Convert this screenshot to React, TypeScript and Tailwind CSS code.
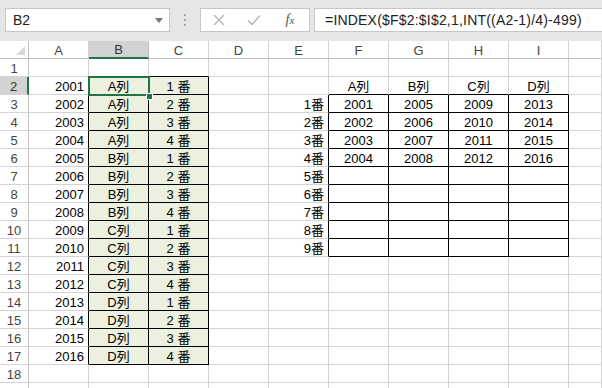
import React from "react";

const colLetters = ["A", "B", "C", "D", "E", "F", "G", "H", "I", ""];
const rowCount = 19;
const letters = ["A", "B", "C", "D"];

interface Cell {
  text?: string;
  align?: "left" | "center" | "right";
  fill?: boolean;
  blackR?: boolean;
  blackB?: boolean;
}

function getCell(r: number, c: number): Cell {
  const cell: Cell = {};
  // left block: A2:C17
  if (r >= 2 && r <= 17) {
    const i = r - 2;
    if (c === 0) {
      cell.text = String(2001 + i);
      cell.align = "right";
      cell.blackR = true;
    }
    if (c === 1) {
      cell.text = letters[Math.floor(i / 4)] + "列";
      cell.align = "center";
      cell.fill = true;
      cell.blackR = true;
      cell.blackB = true;
    }
    if (c === 2) {
      cell.text = (i % 4) + 1 + " 番";
      cell.align = "center";
      cell.fill = true;
      cell.blackR = true;
      cell.blackB = true;
    }
  }
  if (r === 1 && (c === 1 || c === 2)) cell.blackB = true;

  // right table: E2:I11
  if (r === 2 && c >= 5 && c <= 8) {
    cell.text = letters[c - 5] + "列";
    cell.align = "center";
    cell.blackB = true;
  }
  if (r >= 3 && r <= 11) {
    if (c === 4) {
      cell.text = r - 2 + "番";
      cell.align = "right";
      cell.blackR = true;
    }
    if (c >= 5 && c <= 8) {
      cell.blackR = true;
      cell.blackB = true;
      if (r <= 6) {
        cell.text = String(2001 + (c - 5) * 4 + (r - 3));
        cell.align = "center";
      }
    }
  }
  return cell;
}

function TopBar() {
  return (
    <div className="h-[41px] bg-[#e6e6e6] flex items-start pt-[8px] pl-[5px]">
      {/* Name box */}
      <div className="w-[165px] h-[24px] bg-white border border-[#c6c6c6] flex items-center pl-[7px] pr-[6px]">
        <span className="flex-1 text-[14px] text-[#222] leading-none">B2</span>
        <svg width="8" height="5" viewBox="0 0 8 5">
          <path d="M0 0h8L4 5z" fill="#777" />
        </svg>
      </div>
      {/* grip dots */}
      <div className="w-[30px] h-[24px] flex flex-col items-center justify-center gap-[3px]">
        <span className="w-[2px] h-[2px] bg-[#a8a8a8]" />
        <span className="w-[2px] h-[2px] bg-[#a8a8a8]" />
        <span className="w-[2px] h-[2px] bg-[#a8a8a8]" />
      </div>
      {/* buttons */}
      <div className="w-[110px] h-[24px] bg-white border border-[#c6c6c6] flex items-center">
        <div className="w-[36px] flex justify-center">
          <svg width="12" height="12" viewBox="0 0 12 12">
            <path d="M1 1l10 10M11 1L1 11" stroke="#b4b4b4" strokeWidth="1.3" />
          </svg>
        </div>
        <div className="w-[34px] flex justify-center">
          <svg width="14" height="12" viewBox="0 0 14 12">
            <path d="M1 6.5l4 4L13 1.5" stroke="#b4b4b4" strokeWidth="1.4" fill="none" />
          </svg>
        </div>
        <div className="flex-1 flex justify-center">
          <span className="font-['Liberation_Serif',serif] italic text-[14px] text-[#555] leading-none">
            f<span className="text-[11px]">x</span>
          </span>
        </div>
      </div>
      {/* formula */}
      <div className="ml-[4px] flex-1 h-[24px] bg-white border border-[#c6c6c6] border-r-0 flex items-center pl-[10px]">
        <span className="text-[14px] text-[#222] leading-none whitespace-nowrap tracking-[0.2px]">
          =INDEX($F$2:$I$2,1,INT((A2-1)/4)-499)
        </span>
      </div>
    </div>
  );
}

function Sheet() {
  const rows = Array.from({ length: rowCount }, (_, i) => i + 1);
  return (
    <div className="grid grid-cols-[29px_repeat(9,60px)_1fr] auto-rows-[18px]">
      {/* corner */}
      <div className="border-r border-b border-r-[#bfbfbf] border-b-[#bfbfbf] flex items-end justify-end pr-[3px] pb-[3px]">
        <svg width="9" height="9" viewBox="0 0 9 9">
          <path d="M9 0V9H0z" fill="#d9d9d9" />
        </svg>
      </div>
      {colLetters.map((l, c) => (
        <div
          key={"h" + c}
          className={
            c === 1
              ? "flex items-center justify-center pt-[1px] text-[13px] leading-none text-[#333] bg-[#d2d2d2] border-r border-r-[#bfbfbf] border-b-2 border-b-[#217346]"
              : "flex items-center justify-center pt-[1px] text-[13px] leading-none text-[#444] border-r border-b border-r-[#d4d4d4] border-b-[#bfbfbf]"
          }
        >
          {l}
        </div>
      ))}
      {rows.map((r) => (
        <React.Fragment key={r}>
          <div
            className={
              r === 2
                ? "flex items-center justify-center pt-[2px] text-[13px] leading-none text-[#333] bg-[#d2d2d2] border-b border-b-[#d4d4d4] border-r-2 border-r-[#217346]"
                : "flex items-center justify-center pt-[2px] text-[13px] leading-none text-[#444] border-r border-b border-r-[#bfbfbf] border-b-[#d4d4d4]"
            }
          >
            {r < rowCount ? r : ""}
          </div>
          {colLetters.map((_, c) => {
            const cell = getCell(r, c);
            const align =
              cell.align === "right"
                ? "justify-end pr-[4px]"
                : cell.align === "center"
                ? "justify-center"
                : "justify-start pl-[3px]";
            return (
              <div
                key={c}
                className={[
                  "flex items-center pt-[2px] text-[13px] leading-none text-black whitespace-pre border-r border-b",
                  align,
                  cell.fill ? "bg-[#ebf1de]" : "bg-white",
                  cell.blackR ? "border-r-black" : "border-r-[#d4d4d4]",
                  cell.blackB ? "border-b-black" : "border-b-[#d4d4d4]",
                  r === 2 && c === 1 ? "relative" : "",
                ].join(" ")}
              >
                {cell.text}
                {r === 2 && c === 1 && (
                  <div className="absolute -left-[1px] -top-[1px] w-[62px] h-[20px] border-2 border-[#217346] z-10">
                    <div className="absolute left-[56px] top-[15px] w-[7px] h-[7px] bg-[#217346] border border-white" />
                  </div>
                )}
              </div>
            );
          })}
        </React.Fragment>
      ))}
    </div>
  );
}

export default function App() {
  return (
    <div className="w-[602px] h-[388px] overflow-hidden bg-white font-['Liberation_Sans','Noto_Sans_CJK_JP',sans-serif]">
      <TopBar />
      <Sheet />
    </div>
  );
}
